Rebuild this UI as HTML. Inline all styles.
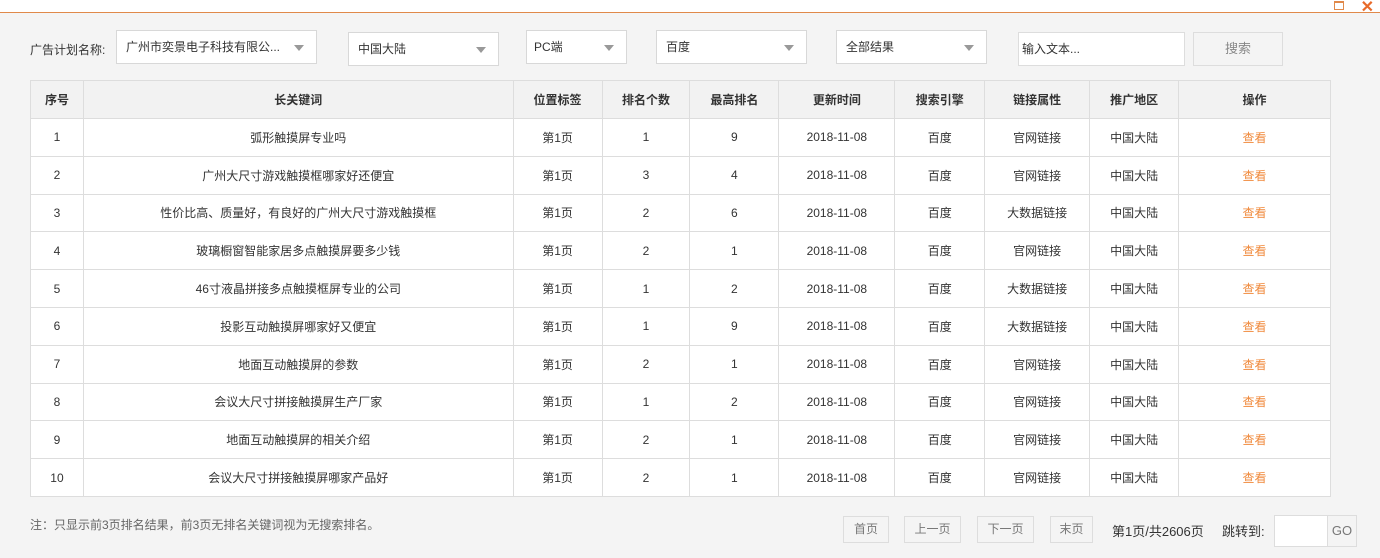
<!DOCTYPE html><html><head><meta charset="utf-8"><style>
*{box-sizing:border-box;margin:0;padding:0}
body{width:1380px;height:558px;overflow:hidden;background:#f4f4f4;font-family:"Liberation Sans","Noto Sans CJK SC",sans-serif;font-size:12px;color:#333;position:relative}
.top{position:absolute;left:0;top:0;width:1380px;height:13px;background:#fff;border-bottom:1px solid #e0894a}
.abs{position:absolute}
.sel{position:absolute;background:#fff;border:1px solid #d8d8d8;height:34px;line-height:32px;padding-left:9px;font-size:12px}
.sel:after{content:"";position:absolute;right:12px;top:14px;border-left:5px solid transparent;border-right:5px solid transparent;border-top:6px solid #999}
table{position:absolute;left:30px;top:80px;border-collapse:collapse;background:#fff;width:1301px}
td,th{border:1px solid #ddd;text-align:center;font-size:12px;height:38px;font-weight:normal;padding:0}
th{background:#f2f2f2;font-weight:bold;height:38px}
tr.r td{height:37.8px}
a{color:#f08a3c;text-decoration:none}
.btn{position:absolute;border:1px solid #ddd;background:#f4f4f4;color:#777;text-align:center;top:516px;height:27px;line-height:25px}
</style></head><body>
<div class="top"></div>
<div class="abs" style="right:36px;top:1px;width:10px;height:9px;border:1px solid #e0894a;border-top-width:2px"></div>
<div class="abs" style="right:6px;top:-3px;color:#e86a2a;font-size:16px;font-weight:bold">✕</div>
<div class="abs" style="left:30px;top:41px">广告计划名称:</div>
<div class="sel" style="left:116px;top:30px;width:201px">广州市奕景电子科技有限公...</div>
<div class="sel" style="left:348px;top:32px;width:151px">中国大陆</div>
<div class="sel" style="left:526px;top:30px;width:101px;padding-left:7px">PC端</div>
<div class="sel" style="left:656px;top:30px;width:151px">百度</div>
<div class="sel" style="left:836px;top:30px;width:151px">全部结果</div>
<div class="abs" style="left:1018px;top:32px;width:167px;height:34px;background:#fff;border:1px solid #ddd;line-height:32px;padding-left:3px">输入文本...</div>
<div class="abs" style="left:1193px;top:32px;width:90px;height:34px;border:1px solid #ddd;line-height:32px;text-align:center;color:#888;font-size:13px">搜索</div>
<table>
<colgroup><col style="width:53px"><col style="width:430px"><col style="width:89px"><col style="width:88px"><col style="width:89px"><col style="width:116px"><col style="width:90px"><col style="width:105px"><col style="width:89px"><col style="width:152px"></colgroup>
<tr><th>序号</th><th>长关键词</th><th>位置标签</th><th>排名个数</th><th>最高排名</th><th>更新时间</th><th>搜索引擎</th><th>链接属性</th><th>推广地区</th><th>操作</th></tr>
<tr class="r"><td>1</td><td>弧形触摸屏专业吗</td><td>第1页</td><td>1</td><td>9</td><td>2018-11-08</td><td>百度</td><td>官网链接</td><td>中国大陆</td><td><a>查看</a></td></tr>
<tr class="r"><td>2</td><td>广州大尺寸游戏触摸框哪家好还便宜</td><td>第1页</td><td>3</td><td>4</td><td>2018-11-08</td><td>百度</td><td>官网链接</td><td>中国大陆</td><td><a>查看</a></td></tr>
<tr class="r"><td>3</td><td>性价比高、质量好，有良好的广州大尺寸游戏触摸框</td><td>第1页</td><td>2</td><td>6</td><td>2018-11-08</td><td>百度</td><td>大数据链接</td><td>中国大陆</td><td><a>查看</a></td></tr>
<tr class="r"><td>4</td><td>玻璃橱窗智能家居多点触摸屏要多少钱</td><td>第1页</td><td>2</td><td>1</td><td>2018-11-08</td><td>百度</td><td>官网链接</td><td>中国大陆</td><td><a>查看</a></td></tr>
<tr class="r"><td>5</td><td>46寸液晶拼接多点触摸框屏专业的公司</td><td>第1页</td><td>1</td><td>2</td><td>2018-11-08</td><td>百度</td><td>大数据链接</td><td>中国大陆</td><td><a>查看</a></td></tr>
<tr class="r"><td>6</td><td>投影互动触摸屏哪家好又便宜</td><td>第1页</td><td>1</td><td>9</td><td>2018-11-08</td><td>百度</td><td>大数据链接</td><td>中国大陆</td><td><a>查看</a></td></tr>
<tr class="r"><td>7</td><td>地面互动触摸屏的参数</td><td>第1页</td><td>2</td><td>1</td><td>2018-11-08</td><td>百度</td><td>官网链接</td><td>中国大陆</td><td><a>查看</a></td></tr>
<tr class="r"><td>8</td><td>会议大尺寸拼接触摸屏生产厂家</td><td>第1页</td><td>1</td><td>2</td><td>2018-11-08</td><td>百度</td><td>官网链接</td><td>中国大陆</td><td><a>查看</a></td></tr>
<tr class="r"><td>9</td><td>地面互动触摸屏的相关介绍</td><td>第1页</td><td>2</td><td>1</td><td>2018-11-08</td><td>百度</td><td>官网链接</td><td>中国大陆</td><td><a>查看</a></td></tr>
<tr class="r"><td>10</td><td>会议大尺寸拼接触摸屏哪家产品好</td><td>第1页</td><td>2</td><td>1</td><td>2018-11-08</td><td>百度</td><td>官网链接</td><td>中国大陆</td><td><a>查看</a></td></tr>
</table>
<div class="abs" style="left:30px;top:516px;color:#666">注：只显示前3页排名结果，前3页无排名关键词视为无搜索排名。</div>
<div class="btn" style="left:843px;width:46px">首页</div>
<div class="btn" style="left:904px;width:57px">上一页</div>
<div class="btn" style="left:977px;width:57px">下一页</div>
<div class="btn" style="left:1050px;width:43px">末页</div>
<div class="abs" style="left:1112px;top:521px;font-size:13px">第1页/共2606页</div>
<div class="abs" style="left:1222px;top:521px;font-size:13px">跳转到:</div>
<div class="abs" style="left:1274px;top:515px;width:54px;height:32px;background:#fff;border:1px solid #ddd"></div>
<div class="abs" style="left:1327px;top:515px;width:30px;height:32px;border:1px solid #ddd;line-height:30px;text-align:center;color:#777;font-size:13px">GO</div>
</body></html>
